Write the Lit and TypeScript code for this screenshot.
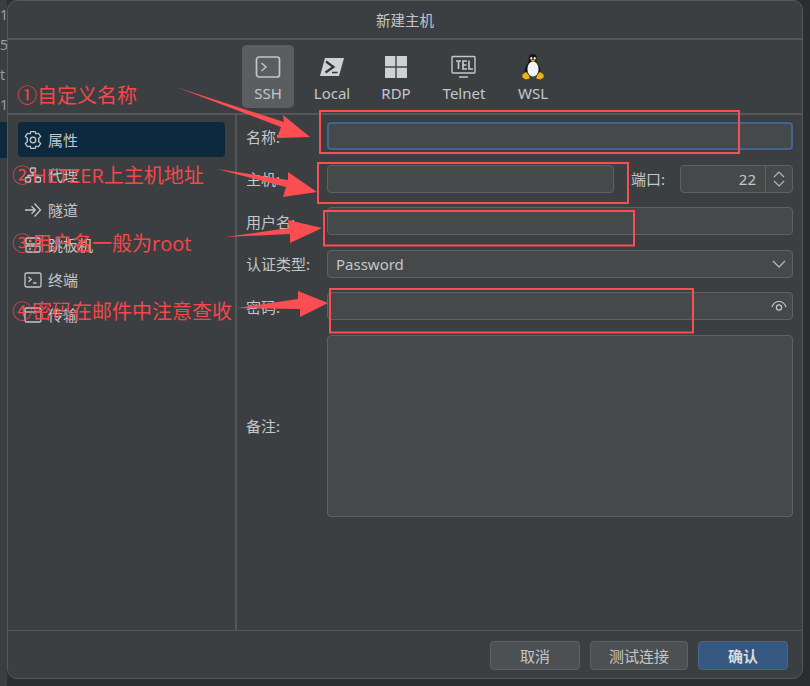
import { LitElement, html, css, svg } from "lit";
import { customElement } from "lit/decorators.js";

const icon = (body: unknown, size = 18) => html`<svg width=${size} height=${size} viewBox="0 0 18 18" fill="none" stroke="currentColor" stroke-width="1.300">${body}</svg>`;

const sideItems = [
  { label: "属性", on: true, icon: svg`<path transform="translate(9 9) scale(1.300 1.080) translate(-9 -9)" stroke-width="1.050" stroke-linejoin="round" d="M7.300 1.300h3.400l.5 2.100 2-.6 1.700 3-1.500 1.500v3.400l1.500 1.500-1.700 3-2-.6-.5 2.100H7.300l-.5-2.100-2 .6-1.700-3 1.500-1.500V7.300L3.100 5.800l1.700-3 2 .6z"/><circle cx="9" cy="9" r="2.800"/>` },
  { label: "代理", on: false, icon: svg`<rect x="6.500" y="2" width="5" height="4.500" rx=".8"/><rect x="1.500" y="11.500" width="5" height="4.500" rx=".8"/><rect x="11.500" y="11.500" width="5" height="4.500" rx=".8"/><path d="M9 6.500v3M4 11.500v-2h10v2"/>` },
  { label: "隧道", on: false, icon: svg`<path d="M1 9h10M7.500 5.200L11.300 9l-3.800 3.800M10.500 2.500L16.500 9l-6 6.500"/>` },
  { label: "跳板机", on: false, icon: svg`<rect x="2" y="2" width="14" height="6" rx="1"/><rect x="2" y="10" width="14" height="6" rx="1"/><path d="M5 5h2M5 13h2"/>` },
  { label: "终端", on: false, icon: svg`<rect x="1" y="2" width="16" height="14" rx="1.600"/><path d="M4.500 6l2.800 2.400-2.800 2.400M9 12h3.500"/>` },
  { label: "传输", on: false, icon: svg`<rect x="1" y="2" width="16" height="14" rx="1.600"/><path d="M1 6h16"/>` },
];

const tools = [
  { label: "SSH", cls: "t52 on", icon: html`<svg width="26" height="24" viewBox="0 0 26 24" fill="none" stroke="#c3c6c9" stroke-width="1.700"><rect x="1.500" y="2" width="23" height="20" rx="2.500"/><path d="M6.500 8l4.500 4-4.500 4" stroke-width="1.400"/></svg>` },
  { label: "Local", cls: "t52", icon: html`<svg width="26" height="24" viewBox="0 0 26 24"><path d="M6 3h19l-5 18H1z" fill="#cfd1d4"/><path d="M7 6.500l7.500 5.500-8 5.500" fill="none" stroke="#33363a" stroke-width="2.200"/><path d="M13 17.500h5.500" stroke="#33363a" stroke-width="1.600"/></svg>` },
  { label: "RDP", cls: "t52", icon: html`<svg width="24" height="24" viewBox="0 0 24 24" fill="#ced0d3"><rect x="1" y="1" width="10.300" height="10.300"/><rect x="12.700" y="1" width="10.300" height="10.300"/><rect x="1" y="12.700" width="10.300" height="10.300"/><rect x="12.700" y="12.700" width="10.300" height="10.300"/></svg>` },
  { label: "Telnet", cls: "t60", icon: html`<svg width="26" height="24" viewBox="0 0 26 24" fill="none" stroke="#c3c6c9"><rect x="1" y="1.500" width="23" height="16.500" rx="1" stroke-width="1.400"/><path d="M8 22h9" stroke-width="1.600"/><path d="M5 6h5M7.500 6v8M16 6h-4v8h4M12 10h3.500M18 5.500V14h4" stroke-width="1.700"/></svg>` },
  { label: "WSL", cls: "t54", icon: html`<svg width="24" height="28" viewBox="0 0 24 28"><path d="M12 1c-3.400 0-4.600 2.600-4.300 5.800.1 1.600-.5 2.700-1.500 4.200-1.600 2.400-3 5-2.600 8l15.800 0c.4-3-1-5.600-2.600-8-1-1.500-1.600-2.600-1.500-4.200C16.600 3.600 15.400 1 12 1z" fill="#17181a"/><ellipse cx="12" cy="16" rx="5.600" ry="7.500" fill="#f4f4f4"/><ellipse cx="10.300" cy="5.300" rx="1" ry="1.400" fill="#f4f4f4"/><ellipse cx="13.700" cy="5.300" rx="1" ry="1.400" fill="#f4f4f4"/><path d="M9.700 7.400L12 6.500l2.300.9L12 9.200z" fill="#e8a90f"/><path d="M1.500 21.500l3.500-2.500 3 3.500.7 3-4 1-3.500-2.200zM22.500 21.500l-3.500-2.500-3 3.500-.7 3 4 1 3.500-2.200z" fill="#efb213"/></svg>` },
];

@customElement("app-root")
export class AppRoot extends LitElement {
  static styles = css`
    :host {
      display: flex;
      position: relative;
      width: 810px;
      height: 686px;
      overflow: hidden;
      background: #2b2d30;
      font-family: "Noto Sans", "Noto Sans CJK SC", sans-serif;
      font-size: 15px;
      color: #c4c7ca;
    }
    .strip { position: relative; width: 7px; height: 686px; background: #3b3e41; flex: none; overflow: hidden; }
    .frag { position: absolute; left: 0; font-size: 14px; line-height: 18px; color: #9a9da0; }
    .f1 { top: 6px; } .f2 { top: 36px; } .f3 { top: 66px; } .f4 { top: 96px; }
    .band { position: absolute; left: 0; top: 122px; width: 7px; height: 36px; background: #0d293e; }
    .dialog {
      width: 796px;
      height: 679px;
      box-sizing: border-box;
      border: 1px solid #55585a;
      border-radius: 10px;
      background: #3c3f41;
      display: flex;
      flex-direction: column;
      flex: none;
      overflow: hidden;
    }
    .title { height: 37px; flex: none; display: flex; align-items: center; justify-content: center; border-bottom: 2px solid #555759; font-size: 14.500px; }
    .toolbar { height: 68px; flex: none; border-bottom: 2px solid #555759; display: flex; gap: 12px; padding-left: 234px; align-items: flex-start; padding-top: 5px; }
    .tool { height: 63px; box-sizing: border-box; border-radius: 5px; display: flex; flex-direction: column; align-items: center; }
    .tool.on { background: #5a5e60; }
    .iconbox { height: 32px; margin-top: 6px; display: flex; align-items: center; justify-content: center; }
    .toollabel { line-height: 20px; }
    .t52 { width: 52px; } .t60 { width: 60px; } .t54 { width: 54px; }
    .middle { flex: 1; display: flex; min-height: 0; }
    .side { width: 229px; box-sizing: border-box; flex: none; border-right: 2px solid #555759; padding: 7px 10px; }
    .sitem { height: 35px; width: 207px; border-radius: 4px; display: flex; align-items: center; gap: 6px; padding-left: 6px; box-sizing: border-box; }
    .sitem.on { background: #0d293e; }
    .form {
      flex: 1;
      box-sizing: border-box;
      padding: 7px 9px 0 9px;
      display: grid;
      grid-template-columns: 81px 1fr;
      row-gap: 14.500px;
      grid-template-rows: 28px 28px 28px 28px 28px 182px;
      align-items: center;
    }
    .field { height: 100%; box-sizing: border-box; background: #45494a; border: 1px solid #5f6263; border-radius: 4px; display: flex; align-items: center; }
    .focus { border: 2px solid #3f6590; }
    .hostrow { display: flex; align-items: center; height: 100%; }
    .hostrow .field { flex: 1; }
    .portlabel { margin: 0 15px 0 17px; }
    .hostrow .spin { flex: none; width: 113px; justify-content: space-between; }
    .val { flex: 1; text-align: right; padding-right: 9px; }
    .arrows { width: 26px; height: 100%; border-left: 1px solid #5f6263; display: flex; align-items: center; justify-content: center; }
    .between { justify-content: space-between; padding: 0 5px 0 8px; }
    .foot { height: 47px; box-sizing: content-box; flex: none; border-top: 1px solid #55585a; display: flex; justify-content: flex-end; align-items: flex-start; gap: 10px; padding-right: 14px; }
    .btn { margin-top: 10px; height: 29px; box-sizing: border-box; background: #4c5052; border: 1px solid #5e6162; border-radius: 4px; display: flex; align-items: center; justify-content: center; }
    .b90 { width: 90px; } .b98 { width: 98px; }
    .primary { background: #365880; border-color: #43688f; font-weight: 700; color: #d5dade; }
    .overlay { position: absolute; left: 0; top: 0; pointer-events: none; }
    .note { position: absolute; font-family: "Open Sans", "Noto Sans CJK SC", sans-serif; font-size: 20px; line-height: 24px; color: #f5474b; white-space: nowrap; }
    .n1 { left: 17px; top: 84px; } .n2 { left: 12px; top: 164px; } .n3 { left: 12px; top: 232px; } .n4 { left: 12px; top: 300px; }
  `;

  render() {
    return html`
      <div class="strip">
        <span class="frag f1">1</span><span class="frag f2">5</span><span class="frag f3">t</span><span class="frag f4">1</span>
        <div class="band"></div>
      </div>
      <div class="dialog">
        <div class="title">新建主机</div>
        <div class="toolbar">
          ${tools.map((t) => html`<div class="tool ${t.cls}"><div class="iconbox">${t.icon}</div><div class="toollabel">${t.label}</div></div>`)}
        </div>
        <div class="middle">
          <div class="side">
            ${sideItems.map((s) => html`<div class="sitem ${s.on ? "on" : ""}">${icon(s.icon)}<span>${s.label}</span></div>`)}
          </div>
          <div class="form">
            <div>名称:</div><div class="field focus"></div>
            <div>主机:</div>
            <div class="hostrow">
              <div class="field"></div><span class="portlabel">端口:</span>
              <div class="field spin"><span class="val">22</span>
                <span class="arrows"><svg width="14" height="20" viewBox="0 0 14 20" fill="none" stroke="#b4b7ba" stroke-width="1.200"><path d="M2 8l5-5 5 5M2 12l5 5 5-5"/></svg></span>
              </div>
            </div>
            <div>用户名:</div><div class="field"></div>
            <div>认证类型:</div>
            <div class="field between"><span>Password</span><svg width="16" height="10" viewBox="0 0 16 10" fill="none" stroke="#b4b7ba" stroke-width="1.300"><path d="M2 2l6 6 6-6"/></svg></div>
            <div>密码:</div>
            <div class="field between"><span></span><svg width="16" height="12" viewBox="0 0 16 12" fill="none" stroke="#c6c8ca" stroke-width="1.200"><path d="M1 7c1.500-4 4-5.500 7-5.500S13.500 3 15 7"/><circle cx="8" cy="7.500" r="2.600"/></svg></div>
            <div>备注:</div><div class="field"></div>
          </div>
        </div>
        <div class="foot">
          <div class="btn b90">取消</div>
          <div class="btn b98">测试连接</div>
          <div class="btn b90 primary">确认</div>
        </div>
      </div>
      <svg class="overlay" width="810" height="686" fill="none">
        <g fill="#fb4e52">
          <polygon points="176,87 284,122 283,115 310,137 277,138 281,127"/>
          <polygon points="217,169 288,180 288,172 317,192 283,197 286,187"/>
          <polygon points="225,237 289,228 288,220 322,228 290,243 290,234"/>
          <polygon points="237,308 298,299 298,291 328,303 300,317 300,309"/>
        </g>
        <g stroke="#fb4e52" stroke-width="2">
          <rect x="320" y="111" width="419" height="42"/>
          <rect x="318" y="163" width="310" height="40"/>
          <rect x="324" y="211" width="310" height="34.500"/>
          <rect x="330" y="289" width="363" height="43.500"/>
        </g>
      </svg>
      <span class="note n1">①自定义名称</span>
      <span class="note n2">②HETZER上主机地址</span>
      <span class="note n3">③用户名一般为root</span>
      <span class="note n4">④密码在邮件中注意查收</span>
    `;
  }
}
